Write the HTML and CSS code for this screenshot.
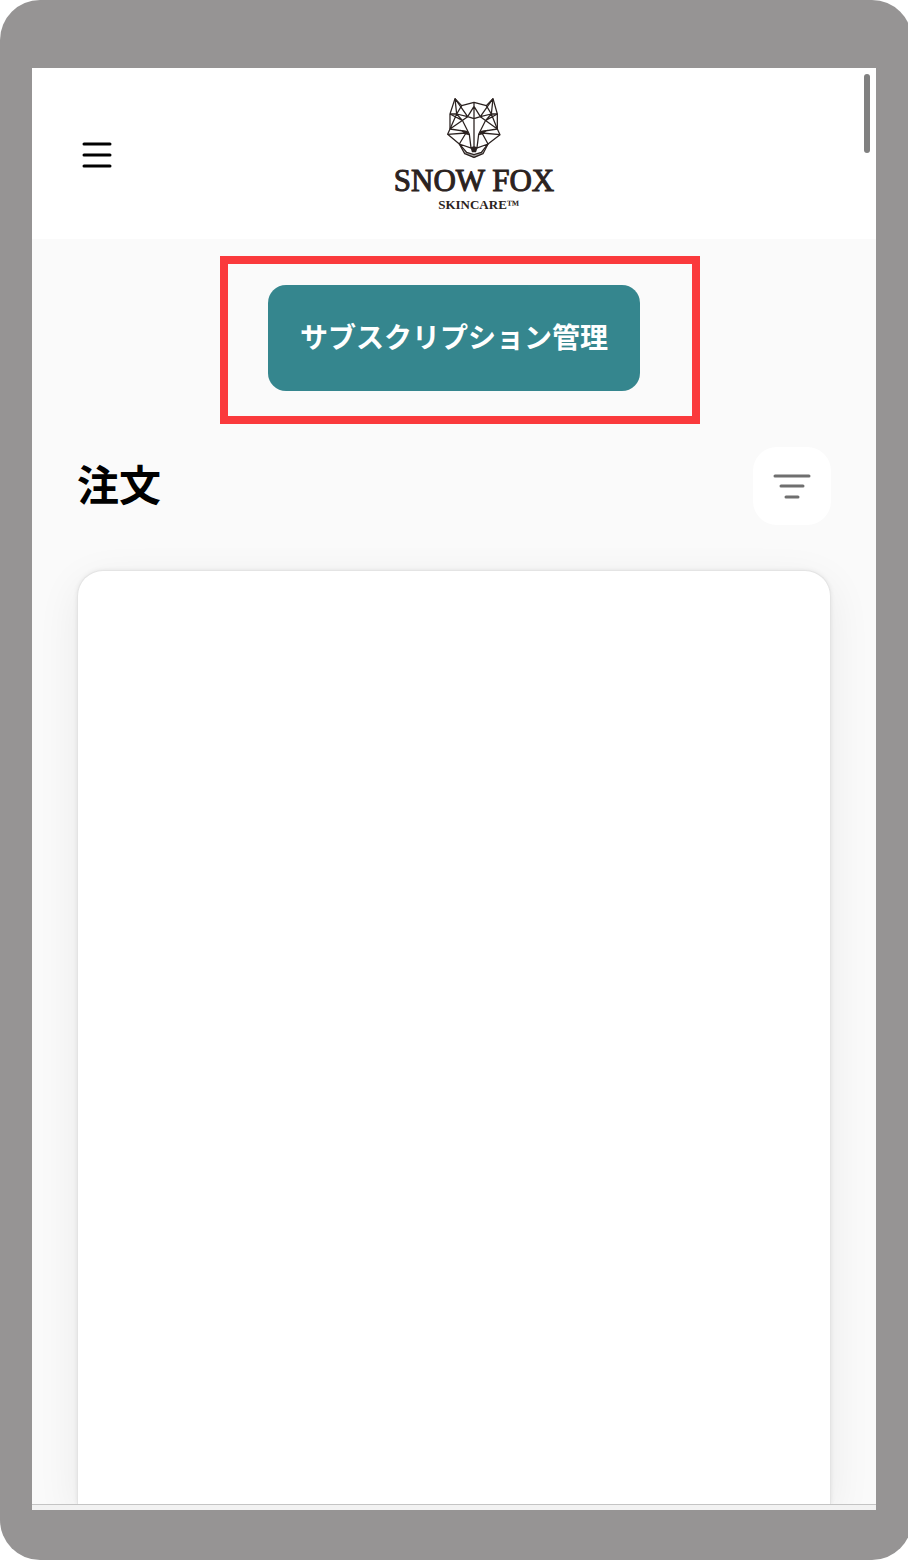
FILE: index.html
```html
<!DOCTYPE html>
<html lang="ja">
<head>
  <meta charset="UTF-8" />
  <meta name="viewport" content="width=device-width, initial-scale=1.0"/>
  <title>注文 - Snow Fox Skincare</title>
  <link rel="stylesheet" href="styles.css">
</head>
<body>
  <div class="device">
    <div class="screen">
      <header class="header">
        <button class="menu-btn" type="button" aria-label="メニュー">
          <svg width="30" height="28" viewBox="0 0 30 28" fill="none" stroke="#000" stroke-width="3" stroke-linecap="round">
            <path d="M2 3h26M2 14h26M2 25h26"/>
          </svg>
        </button>
        <a class="logo" href="#">
          <svg class="fox" viewBox="34 22 168 186" fill="none" stroke="#2b2220" stroke-width="3.8" stroke-linejoin="round">
            <!-- outline -->
            <path d="M61 27L81 48L118 38L155 48L175 27L188 73V118L196 135L160 163L145 192L118 203L90 192L74 163L39 134L46 118V73Z"/>
            <!-- ears -->
            <path d="M61 27L66 73M61 27L99 81M46 73H66L99 81M175 27L170 73M175 27L137 81M188 73H170L137 81"/>
            <!-- forehead -->
            <path d="M118 50L99 81L118 87L137 81L118 50M118 38V176M81 48L66 73M155 48L170 73"/>
            <!-- cheeks -->
            <path d="M66 73L46 118L99 81M46 73L83 92M66 73L83 92M46 118L98 126M170 73L188 118L137 81M188 73L153 92M170 73L153 92M188 118L138 126"/>
            <!-- muzzle -->
            <path d="M83 92L104 134L109 174M153 92L132 134L127 174M39 134L94 130L74 163L112 176M196 135L142 130L160 163L124 176M74 163L96 188L118 195L140 188L160 163"/>
            <g fill="#2b2220" stroke="none">
              <path d="M76 120L100 125L104 137L91 134Z"/>
              <path d="M160 120L136 125L132 137L145 134Z"/>
              <path d="M107 173L118 170L129 173L124 188H112Z"/>
              <path d="M88 182L106 193L118 195L130 193L148 182L143 193L118 206L93 193Z" fill-opacity=".4"/>
            </g>
          </svg>
          <span class="logo-name">SNOW FOX</span>
          <span class="logo-sub">SKINCARE™</span>
        </a>
        <span class="scrollbar"></span>
      </header>

      <main class="content">
        <div class="manage">
          <button class="manage-btn" type="button">サブスクリプション管理</button>
          <span class="highlight"></span>
        </div>

        <div class="title-row">
          <h1>注文</h1>
          <button class="filter-btn" type="button" aria-label="絞り込み">
            <svg width="38" height="28" viewBox="0 0 38 28" fill="none" stroke="#6f6f6f" stroke-width="3" stroke-linecap="round">
              <path d="M2 4h34M8 14h22M13 25h12"/>
            </svg>
          </button>
        </div>

        <section class="order-card"></section>
      </main>

      <div class="bottom-bar"></div>
    </div>
  </div>
</body>
</html>
```
FILE: styles.css
```css
* {
  box-sizing: border-box;
}

body {
  margin: 0;
  background: #fff;
  overflow-x: hidden;
  font-family: "Noto Sans CJK JP", sans-serif;
}

button {
  border: none;
  padding: 0;
  font-family: inherit;
  cursor: pointer;
}

.device {
  display: flex;
  min-height: 100vh;
  margin-right: -4px;
  padding: 68px 36px 50px 32px;
  background: #969494;
  border-radius: 40px;
}

.screen {
  flex: 1;
  display: flex;
  flex-direction: column;
  background: #fafafa;
}

.header {
  position: relative;
  display: flex;
  align-items: center;
  padding: 29px 42px 27px 48px;
  background: #fff;
}

.menu-btn {
  display: flex;
  justify-content: center;
  width: 34px;
  background: none;
}

.logo {
  flex: 1;
  display: flex;
  flex-direction: column;
  align-items: center;
  color: #2b2220;
  font-family: "Liberation Serif", serif;
  text-decoration: none;
}

.fox {
  width: 56px;
  height: 62px;
  margin-bottom: 6px;
}

.logo-name {
  font-size: 31px;
  line-height: 32px;
  -webkit-text-stroke: 1px #2b2220;
}

.logo-sub {
  padding-left: 10px;
  font-size: 13px;
  font-weight: bold;
  line-height: 15px;
}

.scrollbar {
  position: absolute;
  top: 6px;
  right: 6px;
  width: 6px;
  height: 79px;
  background: #808080;
  border-radius: 3px;
}

.content {
  flex: 1;
  display: flex;
  flex-direction: column;
  padding: 46px 45px 0;
  overflow: hidden;
}

.manage {
  position: relative;
  align-self: center;
}

.manage-btn {
  height: 106px;
  padding: 0 32px 4px;
  background: #35868e;
  border-radius: 18px;
  color: #fff;
  font-size: 28px;
  font-weight: bold;
}

/* red marker around the button */
.highlight {
  position: absolute;
  inset: -29px -60px -33px -48px;
  border: 8px solid #fa3a3c;
  pointer-events: none;
}

.title-row {
  display: flex;
  justify-content: space-between;
  align-items: center;
  margin: 56px 0 45px;
}

h1 {
  margin: 0;
  padding-bottom: 6px;
  font-size: 42px;
  line-height: 60px;
  color: #000;
}

.filter-btn {
  display: flex;
  justify-content: center;
  align-items: center;
  width: 78px;
  height: 78px;
  background: #fff;
  border-radius: 24px;
}

.order-card {
  flex: 1;
  background: #fff;
  border: 1px solid #e4e4e4;
  border-bottom: none;
  border-radius: 26px 26px 0 0;
  box-shadow: 0 12px 44px rgba(0, 0, 0, 0.07), 0 0 4px rgba(0, 0, 0, 0.08);
}

.bottom-bar {
  height: 6px;
  background: #f2f2f2;
  border-top: 1px solid #c4c4c4;
}
```
